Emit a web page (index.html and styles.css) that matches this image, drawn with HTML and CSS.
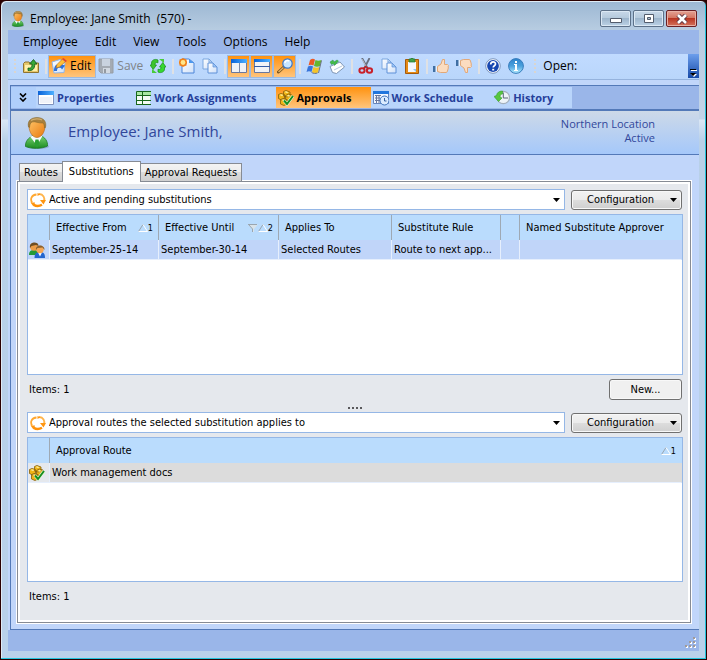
FILE: index.html
```html
<!DOCTYPE html>
<html lang="en">
<head>
<meta charset="utf-8">
<title>Employee: Jane Smith (570)</title>
<link rel="stylesheet" href="styles.css">
</head>
<body>
<svg class="defs" aria-hidden="true">
  <defs>
    <linearGradient id="gSkin" x1="0" y1="0" x2="1" y2="1"><stop offset="0" stop-color="#ffc568"/><stop offset="1" stop-color="#e8780e"/></linearGradient>
    <linearGradient id="gGreen" x1="0" y1="0" x2="0" y2="1"><stop offset="0" stop-color="#7cd472"/><stop offset="1" stop-color="#1c8c22"/></linearGradient>
    <linearGradient id="gBlue" x1="0" y1="0" x2="1" y2="0"><stop offset="0" stop-color="#0a62d8"/><stop offset="1" stop-color="#4db0ff"/></linearGradient>
    <linearGradient id="gPage" x1="0" y1="0" x2="1" y2="1"><stop offset="0" stop-color="#ffffff"/><stop offset="1" stop-color="#cfe0f8"/></linearGradient>
    <linearGradient id="gInfo" x1="0" y1="0" x2="0" y2="1"><stop offset="0" stop-color="#2f84cc"/><stop offset="0.5" stop-color="#4aa0dc"/><stop offset="1" stop-color="#b4ecff"/></linearGradient>
  </defs>
  <symbol id="person" viewBox="0 0 24 32">
    <ellipse cx="13" cy="29.500" rx="11" ry="2.300" fill="#6d87a8" opacity=".5"/>
    <path d="M.5 29.500C0 25 3 21 8 18.500h7c5 1.500 8 6 7.500 10.500-6 3-16 3-22 .5z" fill="url(#gGreen)" stroke="#1c7a24" stroke-width=".8"/>
    <path d="M5 19.500l7 9 5.500-9.500-5.500-1z" fill="#f4fbff"/><path d="M10.500 22.500h3l1 4-2.500 4-2.500-4z" fill="#2ba036"/>
    <path d="M4 9c0 6 3.500 11.500 8 11.500S20 15 20 9c0-4.500-3.500-6.500-8-6.500S4 4.500 4 9z" fill="url(#gSkin)" stroke="#b4661a" stroke-width=".6"/>
    <path d="M3.500 10C2 4 6 .5 12 .5S22 4 20.500 10.500l-1 .5c0-2.500-.5-4-1.500-5C14 6.500 10 4 7 5 5 6 5 8 4.500 10.500z" fill="#a8803e" stroke="#7d6228" stroke-width=".5"/>
    <path d="M6 3.500C9 1.500 14 1.500 17 3" fill="none" stroke="#cfae70" stroke-width="1.200"/>
  </symbol>
  <symbol id="folder" viewBox="0 0 16 16">
    <path d="M.5 5.500L2 4h4l1 1h8.500v9.500H.5z" fill="#e6c76a" stroke="#8f7430"/><path d="M2 7h12v6H2z" fill="#fff0aa"/>
    <path d="M5 12.500V10c3 .5 4-.5 4-4H6.500L10.500 1.500 14 6h-2.200c0 5-2.300 7-6.800 6.500z" fill="#38a838" stroke="#12561a" stroke-width=".8"/>
  </symbol>
  <symbol id="edit" viewBox="0 0 16 16">
    <path d="M1 4l8-2.500 5 3-1 10-10 .5z" fill="url(#gPage)" stroke="#8fb6ea"/><path d="M3 13c0-6 3-7.500 6-6L8 5.500l6 2-3 4-1-1.500c-3-1-4 0-4 3z" fill="#2d72dc"/>
    <path d="M6 6.500L11.500 1l3 2.500L8.500 9 5 10z" fill="#ffc038" stroke="#b86c18" stroke-width=".6"/><path d="M11 1l1.500-1L16 3l-1.500 1z" fill="#e0443a"/>
  </symbol>
  <symbol id="save" viewBox="0 0 16 16">
    <path d="M1 1h14v14H3l-2-2z" fill="#a4abb3" stroke="#969da5"/><path d="M4 1h8v7H4z" fill="#c9d3df"/><path d="M5 10h7v5H5z" fill="#d2d9e1"/><path d="M6 11h2v4H6z" fill="#939aa2"/>
  </symbol>
  <symbol id="refresh" viewBox="0 0 16 16">
    <path d="M8 2C5 .5 1.500 2 1.500 5v2H0l3.200 4.500L6.500 7H5c0-2 1-3 3-2.200z" fill="#3cc42e" stroke="#179018" stroke-width=".7"/>
    <path d="M8 14c3 1.500 6.500 0 6.500-3V9H16l-3.200-4.500L9.500 9H11c0 2-1 3-3 2.200z" fill="#35d830" stroke="#148c18" stroke-width=".7"/>
    <path d="M9 1h5v4zM7 15H2v-4z" fill="#48cc3a"/>
  </symbol>
  <symbol id="newdoc" viewBox="0 0 16 16">
    <path d="M3 1h7l5 4v10H3z" fill="url(#gPage)" stroke="#4d86d8"/><path d="M10 1v4h5z" fill="#4b97ee"/>
    <circle cx="4" cy="4.500" r="4" fill="#f08018"/><path d="M4 0v9M0 4.500h8M1 1.500l6 6M7 1.500l-6 6" stroke="#f08018"/><circle cx="4" cy="4.500" r="2.400" fill="#ffe68a"/>
  </symbol>
  <symbol id="copy" viewBox="0 0 16 16">
    <path d="M1 1h6l3 3v7H1z" fill="url(#gPage)" stroke="#7ba6de"/><path d="M7 1v3h3" fill="none" stroke="#7ba6de"/>
    <path d="M6 5h5l4 4v6H6z" fill="url(#gPage)" stroke="#5e91d8"/><path d="M11 5v4h4z" fill="#9bc6f5" stroke="#5e91d8" stroke-width=".7"/>
  </symbol>
  <symbol id="win" viewBox="0 0 16 16">
    <path d="M.5 1.500h15v13H.5z" fill="#fff" stroke="#7f92bd"/><path d="M0 1h16v4H0z" fill="url(#gBlue)"/><path d="M2 7h12v6H2z" fill="#f0f2f8"/>
  </symbol>
  <symbol id="vsplit" viewBox="0 0 16 16">
    <path d="M.5 1.500h15v13H.5z" fill="#f0f2f6" stroke="#6878a0"/><path d="M0 1h16v4H0z" fill="url(#gBlue)"/><path d="M8.500 5v9" stroke="#7c88a4"/>
  </symbol>
  <symbol id="hsplit" viewBox="0 0 16 16">
    <path d="M.5 1.500h15v13H.5z" fill="#f0f2f6" stroke="#6878a0"/><path d="M0 1h16v3H0z" fill="url(#gBlue)"/><path d="M0 8.500h16" stroke="#345da8"/>
  </symbol>
  <symbol id="search" viewBox="0 0 16 16">
    <path d="M1.500 14l6-5.500" stroke="#705020" stroke-width="3" stroke-linecap="round"/><path d="M1.500 14l5-4.500" stroke="#e8b060" stroke-width="1.500"/>
    <circle cx="10.500" cy="5.500" r="4.700" fill="#c8e6ff" stroke="#3976ca" stroke-width="1.200"/><path d="M8 5c0-2 2-3 4-2" fill="none" stroke="#fff" stroke-width="1.500"/>
  </symbol>
  <symbol id="flag" viewBox="0 0 16 16">
    <path d="M4 2c2-1.500 3.500-1.500 5-.5L7.500 7.500C5.500 6.500 4 6.500 2.500 7.500z" fill="#ec5a25"/><path d="M9.500 2c2 1 3.500 1 6 0L14 8c-2 1-4 1-6 0z" fill="#66b62e"/>
    <path d="M2 8.500c2-1 3.500-1 5 0L5.500 14c-2-1-3-1-5 0z" fill="#3975da"/><path d="M7.500 9c2 1 4 1 6 0L12 14.500c-2 1-4 1-6-.5z" fill="#f5c429"/>
    <path d="M15.500 2.500l-3 12.500M11.500 15c-2 .8-4 .5-6-.5" fill="none" stroke="#6c7484" stroke-width="1"/>
  </symbol>
  <symbol id="tag" viewBox="0 0 16 16">
    <path d="M1 8.500L11 4l4.500 5-8 6.500-4-1z" fill="#fff" stroke="#7e95b4"/><path d="M5 12l8-4" stroke="#b5c8df"/><path d="M1 4l3-2 1 2 3-2 1.500 1L5.500 7.500l-1-2-2 1z" fill="#43bd47" stroke="#2b9040" stroke-width=".5"/>
  </symbol>
  <symbol id="cut" viewBox="0 0 16 16">
    <path d="M4 0l6 11M11.500 0L6 11" stroke="#687080" stroke-width="1.800"/><path d="M4 1l5 9" stroke="#dce1e8" stroke-width=".7"/>
    <ellipse cx="4" cy="12.500" rx="2.600" ry="2.200" fill="none" stroke="#c8202a" stroke-width="2"/><ellipse cx="11.500" cy="12.500" rx="2.600" ry="2.200" fill="none" stroke="#c8202a" stroke-width="2"/><path d="M5.500 10.500l2.300-2 2.200 2" stroke="#b82028" stroke-width="1.500" fill="none"/>
  </symbol>
  <symbol id="paste" viewBox="0 0 16 16">
    <path d="M1.500 1.500h13v14h-13z" fill="#e48b17" stroke="#a55b0c"/><path d="M4 4h8v10H4z" fill="#f3f8ff"/><path d="M9 11h3v3z" fill="#8fc5ee"/><path d="M5 1h2V0h2v1h2v3H5z" fill="#41a14b" stroke="#23752f" stroke-width=".7"/>
  </symbol>
  <symbol id="thumb" viewBox="0 0 16 16">
    <path d="M0 8h4v6H0z" fill="#3f6fa4"/><path d="M2.500 8H4v6H2.500z" fill="#e5f1ff"/>
    <path d="M4.500 8.500L8 6l1.500-4.500h2V6.500h3l1 1-.5 1.500.5 1-.7 1 .2 1-.8 1v1l-.7.500H7.500l-3-1z" fill="#fbdcc0" stroke="#e2a878"/>
  </symbol>
  <symbol id="help" viewBox="0 0 16 16">
    <circle cx="8" cy="8" r="7.300" fill="#f8fbff" stroke="#7e97bd"/><circle cx="8" cy="8" r="5.900" fill="#1747b0"/>
    <path d="M5.700 6.500C5.700 3 10.500 3 10.500 6c0 1.800-2.300 1.700-2.300 3.500" fill="none" stroke="#fff" stroke-width="1.700"/><path d="M7.200 10.800h2v1.700h-2z" fill="#fff"/>
  </symbol>
  <symbol id="info" viewBox="0 0 16 16">
    <circle cx="8" cy="8" r="7.400" fill="url(#gInfo)" stroke="#377dbd"/><path d="M7 3h2v2H7zM6 6h3v6h1v1H6v-1h1V7H6z" fill="#fff"/>
  </symbol>
  <symbol id="grid" viewBox="0 0 16 16">
    <path d="M1 2h14v13H1z" fill="#f3fbf4"/><path d="M1 2h15v3H1z" fill="#a9e8a2"/><path d="M1.500 15V1.500H16M1 5.500h15M1 10.500h15M7.500 1v13M1 14.500h15" fill="none" stroke="#17661c"/>
  </symbol>
  <symbol id="approve" viewBox="0 0 16 16">
    <path d="M5.500 1.500L8 .5l4 1.500v4l-3 1-3.500-1zM.5 4.500L3 3.500l3.500 1v4l-3 1.500-3-1.500zM7.500 5.500l3-1.500 3.500 1v4l-3 2-3.500-1.500zM2.500 9.500l2.500-1 4 1v4.500L6 15.500 2.500 14z" fill="#f0b516" stroke="#86600a" stroke-width=".8"/>
    <path d="M6.500 2l1.500-.7 2.500 1L9 3zM1.500 5L3 4.300l2.500.7L4 6zM8.500 6l2-1 2 .7-1.500 1zM3.500 10l1.500-.7 2 .6L6 11z" fill="#fff2a4"/>
    <path d="M6 10.500l3 3.500 6-8" fill="none" stroke="#e8f8d8" stroke-width="3"/><path d="M6 10.500l3 3.500 6-8" fill="none" stroke="#178e20" stroke-width="2"/>
  </symbol>
  <symbol id="schedule" viewBox="0 0 16 16">
    <path d="M.5 1.500h15v12H.5z" fill="#f4f8ff" stroke="#6585bd"/><path d="M0 1h16v3H0z" fill="#2176dd"/><path d="M2 5.500h6M2 8h5M2 10.500h5M3.500 5v8M6 5v8" stroke="#69779c"/>
    <circle cx="11.500" cy="10.500" r="4.500" fill="#dcecff" stroke="#3c72bd"/><path d="M11.500 8v3h2" fill="none" stroke="#3460a0"/>
  </symbol>
  <symbol id="history" viewBox="0 0 16 16">
    <circle cx="9.300" cy="7.500" r="6.200" fill="#edf3f8" stroke="#a3afbd" stroke-width="1.200"/><path d="M9.300 2.500V8H14" fill="none" stroke="#596577"/><path d="M8.500 1C5 1 3 2.500 2.500 5.500L0 6.500l4.500 5L8 8 6 7c0-2 1-3 2.500-3z" fill="#58c63f" stroke="#319b2a" stroke-width=".6"/>
  </symbol>
  <symbol id="cycle" viewBox="0 0 16 16">
    <path d="M6.500 2.500C1.500 3 0 7 2 10.500" fill="none" stroke="#ffa832" stroke-width="1.800"/><path d="M9 2c4.500.3 6 3.800 5 7" fill="none" stroke="#ffb54c" stroke-width="1.800"/>
    <path d="M3.500 12.500c2.500 2 6 1.700 8.500.3" fill="none" stroke="#ff9008" stroke-width="2.400"/><path d="M10 8h6l-2.500 4.500zM.5 10.500l4.500 0-1.500 4zM7.500 1l3 1.200L7.500 4z" fill="#ff9510"/>
  </symbol>
  <symbol id="people" viewBox="0 0 16 16">
    <path d="M0 13c0-4 2-5 5-5s5 2 5 5z" fill="#229a36"/><circle cx="5" cy="4.800" r="3.900" fill="#ed9c48"/><path d="M1 6C-.5-1 10-1 9.500 4L7 3 2.500 4z" fill="#704d22"/>
    <path d="M5.500 16c0-4 1.500-6 5.500-6s5 2 5 6z" fill="#2265cf"/><path d="M9 10.500l2 4 2-4z" fill="#fff"/><circle cx="11" cy="7.500" r="3.700" fill="#f6a654"/><path d="M7 8c-1-6 9-6 8.500 0l-2-2.500-5 .5z" fill="#8a6030"/>
  </symbol>
  <symbol id="sort" viewBox="0 0 10 8"><path d="M.5 7.500L5 .5" stroke="#9aa6b0" fill="none"/><path d="M5 .5l4.500 7H.5" stroke="#fff" fill="none"/></symbol>
  <symbol id="filter" viewBox="0 0 10 8"><path d="M0 .5h10L6 5v3H4V5z" fill="#d8e3ea"/><path d="M0 .5h9M1 1l3.500 4v3" fill="none" stroke="#9aa6b0"/></symbol>
</svg>

<div class="window">
  <header class="titlebar">
    <svg class="icon title-icon"><use href="#person"/></svg>
    <h1 class="title">Employee: Jane Smith&nbsp; (570) -</h1>
    <div class="window-buttons">
      <button class="wbtn" aria-label="Minimize"><svg class="wglyph" viewBox="0 0 12 10"><path d="M.5 4.500h11v4H.5z" fill="#fff" stroke="#535c6c"/></svg></button>
      <button class="wbtn" aria-label="Maximize"><svg class="wglyph" viewBox="0 0 12 10"><path d="M1.500.5h9v8h-9z" fill="#fff" stroke="#535c6c"/><path d="M4.500 3.500h3v2h-3z" fill="#a9bdd0" stroke="#535c6c"/></svg></button>
      <button class="wbtn wbtn-close" aria-label="Close"><svg class="wglyph" viewBox="0 0 12 10"><path d="M2 1l8 8M10 1L2 9" stroke="#5c3440" stroke-width="4.500"/><path d="M2 1l8 8M10 1L2 9" stroke="#fff" stroke-width="2.600"/></svg></button>
    </div>
  </header>

  <div class="client">
    <nav class="menubar" aria-label="Menu">
      <button>Employee</button><button>Edit</button><button>View</button><button>Tools</button><button>Options</button><button>Help</button>
    </nav>

    <div class="toolbar" role="toolbar" aria-label="Standard">
      <span class="grip"></span>
      <button class="tool" aria-label="Up"><svg class="icon"><use href="#folder"/></svg></button>
      <span class="sep"></span>
      <button class="tool tool-text tool-on"><svg class="icon"><use href="#edit"/></svg>Edit</button>
      <button class="tool tool-text" disabled><svg class="icon"><use href="#save"/></svg>Save</button>
      <button class="tool" aria-label="Refresh"><svg class="icon"><use href="#refresh"/></svg></button>
      <span class="sep"></span>
      <button class="tool" aria-label="New"><svg class="icon"><use href="#newdoc"/></svg></button>
      <button class="tool" aria-label="Duplicate"><svg class="icon"><use href="#copy"/></svg></button>
      <span class="sep"></span>
      <button class="tool tool-on" aria-label="Columns"><svg class="icon"><use href="#vsplit"/></svg></button>
      <button class="tool tool-on" aria-label="Rows"><svg class="icon"><use href="#hsplit"/></svg></button>
      <button class="tool tool-on" aria-label="Search"><svg class="icon"><use href="#search"/></svg></button>
      <span class="sep"></span>
      <button class="tool" aria-label="Windows"><svg class="icon"><use href="#flag"/></svg></button>
      <button class="tool" aria-label="Tag"><svg class="icon"><use href="#tag"/></svg></button>
      <span class="sep"></span>
      <button class="tool" aria-label="Cut"><svg class="icon"><use href="#cut"/></svg></button>
      <button class="tool" aria-label="Copy"><svg class="icon"><use href="#copy"/></svg></button>
      <button class="tool" aria-label="Paste"><svg class="icon"><use href="#paste"/></svg></button>
      <span class="sep"></span>
      <button class="tool" aria-label="Approve"><svg class="icon"><use href="#thumb"/></svg></button>
      <button class="tool" aria-label="Reject"><svg class="icon flip"><use href="#thumb"/></svg></button>
      <span class="sep"></span>
      <button class="tool" aria-label="Help"><svg class="icon"><use href="#help"/></svg></button>
      <button class="tool" aria-label="About"><svg class="icon"><use href="#info"/></svg></button>
      <span class="grip grip-open"></span>
      <span class="open-label">Open:</span>
      <button class="overflow" aria-label="Toolbar options"><svg class="overflow-glyph" viewBox="0 0 7 8"><path d="M1 1h6v1H1zM1 5h6L4 8z" fill="#fff"/><path d="M0 0h6v1H0zM0 4h6L3 7z" fill="#000"/></svg></button>
    </div>

    <main class="workspace">
      <nav class="sections" aria-label="Sections">
        <button class="expand" aria-label="Expand"><svg class="chevrons" viewBox="0 0 8 9"><path d="M1 .5l3 3 3-3M1 5l3 3 3-3" fill="none" stroke="#000" stroke-width="1.600"/></svg></button>
        <a class="section" href="#properties"><svg class="icon"><use href="#win"/></svg>Properties</a>
        <a class="section" href="#assignments"><svg class="icon"><use href="#grid"/></svg>Work Assignments</a>
        <a class="section section-on" href="#approvals"><svg class="icon"><use href="#approve"/></svg>Approvals</a>
        <a class="section" href="#schedule-view"><svg class="icon"><use href="#schedule"/></svg>Work Schedule</a>
        <a class="section" href="#history-view"><svg class="icon"><use href="#history"/></svg>History</a>
      </nav>

      <div class="banner">
        <svg class="avatar"><use href="#person"/></svg>
        <h2 class="banner-title">Employee: Jane Smith,</h2>
        <div class="banner-info">Northern Location<br>Active</div>
      </div>

      <div class="content">
        <div class="tabs" role="tablist">
          <button class="tab" role="tab">Routes</button>
          <button class="tab tab-on" role="tab" aria-selected="true">Substitutions</button>
          <button class="tab" role="tab">Approval Requests</button>
        </div>
        <div class="page">
          <div class="filter-row">
            <div class="combo">
              <svg class="icon"><use href="#cycle"/></svg>
              <select aria-label="Substitution view"><option>Active and pending substitutions</option></select>
              <svg class="arrow" viewBox="0 0 7 4"><path d="M0 0h7L3.500 4z"/></svg>
            </div>
            <button class="btn btn-menu">Configuration<svg class="arrow" viewBox="0 0 7 4"><path d="M0 0h7L3.500 4z"/></svg></button>
          </div>
          <div class="list list-main">
            <table>
              <colgroup><col class="c-icon"><col class="c-from"><col class="c-until"><col class="c-applies"><col class="c-rule"><col class="c-gap"><col></colgroup>
              <thead><tr>
                <th></th>
                <th><div class="head">Effective From<span class="marks"><svg class="mark"><use href="#sort"/></svg>1</span></div></th>
                <th><div class="head">Effective Until<span class="marks"><svg class="mark"><use href="#filter"/></svg><svg class="mark"><use href="#sort"/></svg>2</span></div></th>
                <th><div class="head">Applies To</div></th>
                <th><div class="head">Substitute Rule</div></th>
                <th></th>
                <th><div class="head">Named Substitute Approver</div></th>
              </tr></thead>
              <tbody><tr>
                <td><svg class="icon"><use href="#people"/></svg></td>
                <td>September-25-14</td><td>September-30-14</td><td>Selected Routes</td><td>Route to next app...</td><td></td><td></td>
              </tr></tbody>
            </table>
          </div>
          <div class="footer-row"><span>Items: 1</span><button class="btn btn-new">New...</button></div>
          <div class="splitter"><i></i><i></i><i></i><i></i></div>
          <div class="filter-row">
            <div class="combo">
              <svg class="icon"><use href="#cycle"/></svg>
              <select aria-label="Route view"><option>Approval routes the selected substitution applies to</option></select>
              <svg class="arrow" viewBox="0 0 7 4"><path d="M0 0h7L3.500 4z"/></svg>
            </div>
            <button class="btn btn-menu">Configuration<svg class="arrow" viewBox="0 0 7 4"><path d="M0 0h7L3.500 4z"/></svg></button>
          </div>
          <div class="list list-routes">
            <table>
              <colgroup><col class="c-icon"><col></colgroup>
              <thead><tr><th></th><th><div class="head">Approval Route<span class="marks"><svg class="mark"><use href="#sort"/></svg>1</span></div></th></tr></thead>
              <tbody><tr class="row-gray"><td><svg class="icon"><use href="#approve"/></svg></td><td>Work management docs</td></tr></tbody>
            </table>
          </div>
          <div class="footer-row footer-last"><span>Items: 1</span></div>
        </div>
      </div>
    </main>

    <footer class="status">
      <svg class="sizer" viewBox="0 0 12 12"><path d="M9 1h2v2H9zM5 5h2v2H5zM9 5h2v2H9zM1 9h2v2H1zM5 9h2v2H5zM9 9h2v2H9z" fill="#fff"/><path d="M8 0h2v2H8zM4 4h2v2H4zM8 4h2v2H8zM0 8h2v2H0zM4 8h2v2H4zM8 8h2v2H8z" fill="#a09a98"/></svg>
    </footer>
  </div>
</div>
</body>
</html>
```
FILE: styles.css
```css
* { box-sizing: border-box; }

html, body { margin: 0; height: 100%; }

body {
  background: #2a0000;
  font: 11px/14px "DejaVu Sans Condensed", "Noto Sans", sans-serif;
  color: #000;
}

button, select { font: inherit; color: inherit; margin: 0; padding: 0; border: 0; background: none; }
h1, h2 { margin: 0; font-weight: normal; }
.defs { position: absolute; width: 0; height: 0; }
.icon { width: 16px; height: 16px; flex: none; display: block; }
.arrow { width: 7px; height: 4px; flex: none; }

.window {
  min-height: 100%;
  display: flex;
  flex-direction: column;
  border: 1px solid #2a0000;
  border-radius: 6px 6px 0 0;
  background: linear-gradient(#9cb7d3 0, #b8cde2 30px, #c2d4e8 118px, #dbe7f5 119px, #b8d0e8 140px, #b9d1ea 100%);
  box-shadow: inset -1px -1px #22c4dc, inset 1px 1px #dfebf5;
  padding: 0 7px 8px;
}

.titlebar {
  height: 29px;
  display: flex;
  align-items: center;
  gap: 4px;
  padding: 6px 2px 0 2px;
  font-family: "Open Sans", "Noto Sans", sans-serif;
}
.title { flex: 1; font-size: 12px; line-height: 16px; }
.window-buttons { display: flex; gap: 2px; }
.wbtn {
  width: 31px;
  height: 17px;
  display: grid;
  place-items: center;
  border: 1px solid #5d7189;
  border-radius: 2px;
  background: linear-gradient(#c8d8e8, #b4c9dc 48%, #9db5cc 50%, #bcd2e6);
  box-shadow: inset 0 0 0 1px #dbe8f4;
}
.wbtn-close {
  border-color: #6b2024;
  background: linear-gradient(#e3a294, #d4735f 48%, #b93622 50%, #d4735c);
  box-shadow: inset 0 0 0 1px #e8b0a4;
}
.wglyph { width: 12px; height: 10px; }

.client { flex: 1; display: flex; flex-direction: column; background: #c1d6fa; }

.menubar {
  height: 24px;
  display: flex;
  align-items: center;
  gap: 17px;
  padding-left: 15px;
  background: #9ab6e9;
  font: 12px/16px "Open Sans", "Noto Sans", sans-serif;
}

.toolbar {
  height: 26px;
  display: flex;
  align-items: center;
  padding: 0 0 1px 6px;
  background: linear-gradient(#c1dbff, #b9d6fb);
  border-bottom: 1px solid #95b3dd;
  font: 12px/16px "Open Sans", "Noto Sans", sans-serif;
}
.grip {
  width: 2px;
  height: 14px;
  margin-right: 3px;
  background: repeating-linear-gradient(#d9d5d0 0 2px, transparent 2px 4px);
}
.grip-open { margin: 0 7px; }
.sep { width: 6px; height: 15px; border-left: 3px solid transparent; background: linear-gradient(90deg, #dfe1e4 2px, transparent 2px) content-box; }
.tool { min-width: 23px; height: 23px; display: flex; align-items: center; justify-content: center; }
.tool-text { gap: 3px; padding: 0 4px 0 2px; }
.tool-on { border: 1px solid #9ebadf; background: linear-gradient(#ff920f, #ffc57d); }
.tool:disabled { color: #808488; padding-right: 3px; }
.flip { transform: scaleY(-1); }
.open-label { flex: 1; }
.overflow {
  width: 11px;
  align-self: stretch;
  display: flex;
  align-items: flex-end;
  justify-content: center;
  padding-bottom: 1px;
  background: linear-gradient(#6c9eec, #174aa8);
}
.overflow-glyph { width: 7px; height: 8px; }

.workspace {
  flex: 1;
  display: flex;
  flex-direction: column;
  margin: 5px 0 0 2px;
  border: 1px solid #5379b8;
  border-right: 0;
}

.sections {
  height: 25px;
  display: flex;
  padding: 1px 0;
  background: #9ab6e9;
  border-bottom: 2px solid #5379b8;
  font: bold 11px/16px "Open Sans", "Noto Sans", sans-serif;
  color: #25409a;
}
.expand { width: 25px; display: grid; place-items: center; padding-right: 2px; background: #b0cffb; }
.chevrons { width: 8px; height: 9px; }
.section {
  display: flex;
  align-items: center;
  gap: 3px;
  padding: 0 19px 0 2px;
  background: #b9d5fb;
  color: inherit;
  text-decoration: none;
}
.section-on { background: linear-gradient(#ff920f, #ffc57d); color: #000; }

.banner {
  height: 44px;
  display: flex;
  align-items: center;
  padding: 0 44px 0 14px;
  background: linear-gradient(#cdd9e8, #a5c8fa);
  border-bottom: 1px solid #5379b8;
  font-family: "Open Sans", "Noto Sans", sans-serif;
  color: #31479b;
}
.avatar { width: 24px; height: 32px; flex: none; }
.banner-title { flex: 1; margin-left: 19px; padding-bottom: 3px; font-size: 15px; line-height: 20px; }
.banner-info { text-align: right; padding-bottom: 3px; font-size: 11px; line-height: 14px; }

.content { flex: 1; display: flex; flex-direction: column; padding: 6px 8px 6px 6px; }

.tabs { display: flex; align-items: flex-end; height: 20px; padding-left: 3px; z-index: 1; }
.tab {
  height: 18px;
  padding: 0 4px;
  border: 1px solid #868b94;
  border-bottom: 0;
  margin-left: -1px;
  background: linear-gradient(#f3f3f3, #ececec 50%, #dcdcdc 50%, #d0d0d0);
}
.tab-on { height: 21px; padding: 0 6px 1px; background: #fff; margin-bottom: -1px; }

.page {
  flex: 1;
  display: flex;
  flex-direction: column;
  border: 1px solid #868b94;
  outline: 1px solid #fff;
  box-shadow: inset 0 0 0 2px #fff;
  padding: 7px 7px 6px 9px;
  background: #e5e8ed;
}

.filter-row { display: flex; align-items: center; gap: 6px; padding-right: 1px; }
.combo {
  flex: 1;
  height: 21px;
  display: flex;
  align-items: center;
  gap: 3px;
  padding: 0 4px 0 2px;
  border: 1px solid #95b7e6;
  background: #fff;
}
.combo select { flex: 1; appearance: none; outline: 0; }
.btn {
  height: 20px;
  border: 1px solid #707070;
  border-radius: 3px;
  background: linear-gradient(#f2f2f2, #ebebeb 50%, #dddddd 50%, #cfcfcf);
  box-shadow: inset 0 0 0 1px #f8f8f8;
}
.btn-menu { width: 111px; display: flex; align-items: center; justify-content: space-between; padding: 0 4px 0 15px; }
.btn-new { width: 73px; height: 21px; background: #f0f0f0; }

.list { border: 1px solid #95b7e6; background: #fff; margin-top: 4px; }
.list-main { flex: 161 0 161px; }
.list-routes { flex: 145 0 145px; }
table { width: 100%; table-layout: fixed; border-collapse: separate; border-spacing: 0; }
.c-icon { width: 22px; }
.c-from { width: 109px; }
.c-until { width: 120px; }
.c-applies { width: 113px; }
.c-rule { width: 109px; }
.c-gap { width: 19px; }
th { height: 25px; padding: 0; background: #badcfd; border-right: 1px solid #9ea9b4; font-weight: normal; text-align: left; }
.head { display: flex; justify-content: space-between; align-items: center; padding: 0 5px 0 6px; white-space: nowrap; }
.marks { display: flex; align-items: center; font-size: 9px; line-height: 12px; }
.mark { width: 10px; height: 8px; }
td { height: 20px; padding: 1px 2px 0; background: #c0d5f9; border-right: 1px solid #e6effd; border-bottom: 1px solid #e6effd; white-space: nowrap; }
td:first-child { padding-left: 1px; }
th:last-child, td:last-child { border-right-color: transparent; }
.row-gray td { background: #dcdcdc; }
.row-gray td:first-child { background: #e5e8ed; }

.footer-row { height: 29px; display: flex; align-items: center; justify-content: space-between; padding: 0 1px 0 2px; }
.footer-last { height: 34px; padding-bottom: 5px; }
.splitter { height: 8px; display: flex; justify-content: center; align-items: center; gap: 2px; }
.splitter i { width: 2px; height: 2px; background: #59595c; }

.status {
  height: 21px;
  display: flex;
  justify-content: flex-end;
  align-items: flex-end;
  padding: 2px;
  background: #9ab6e9;
}
.sizer { width: 12px; height: 12px; }
```
